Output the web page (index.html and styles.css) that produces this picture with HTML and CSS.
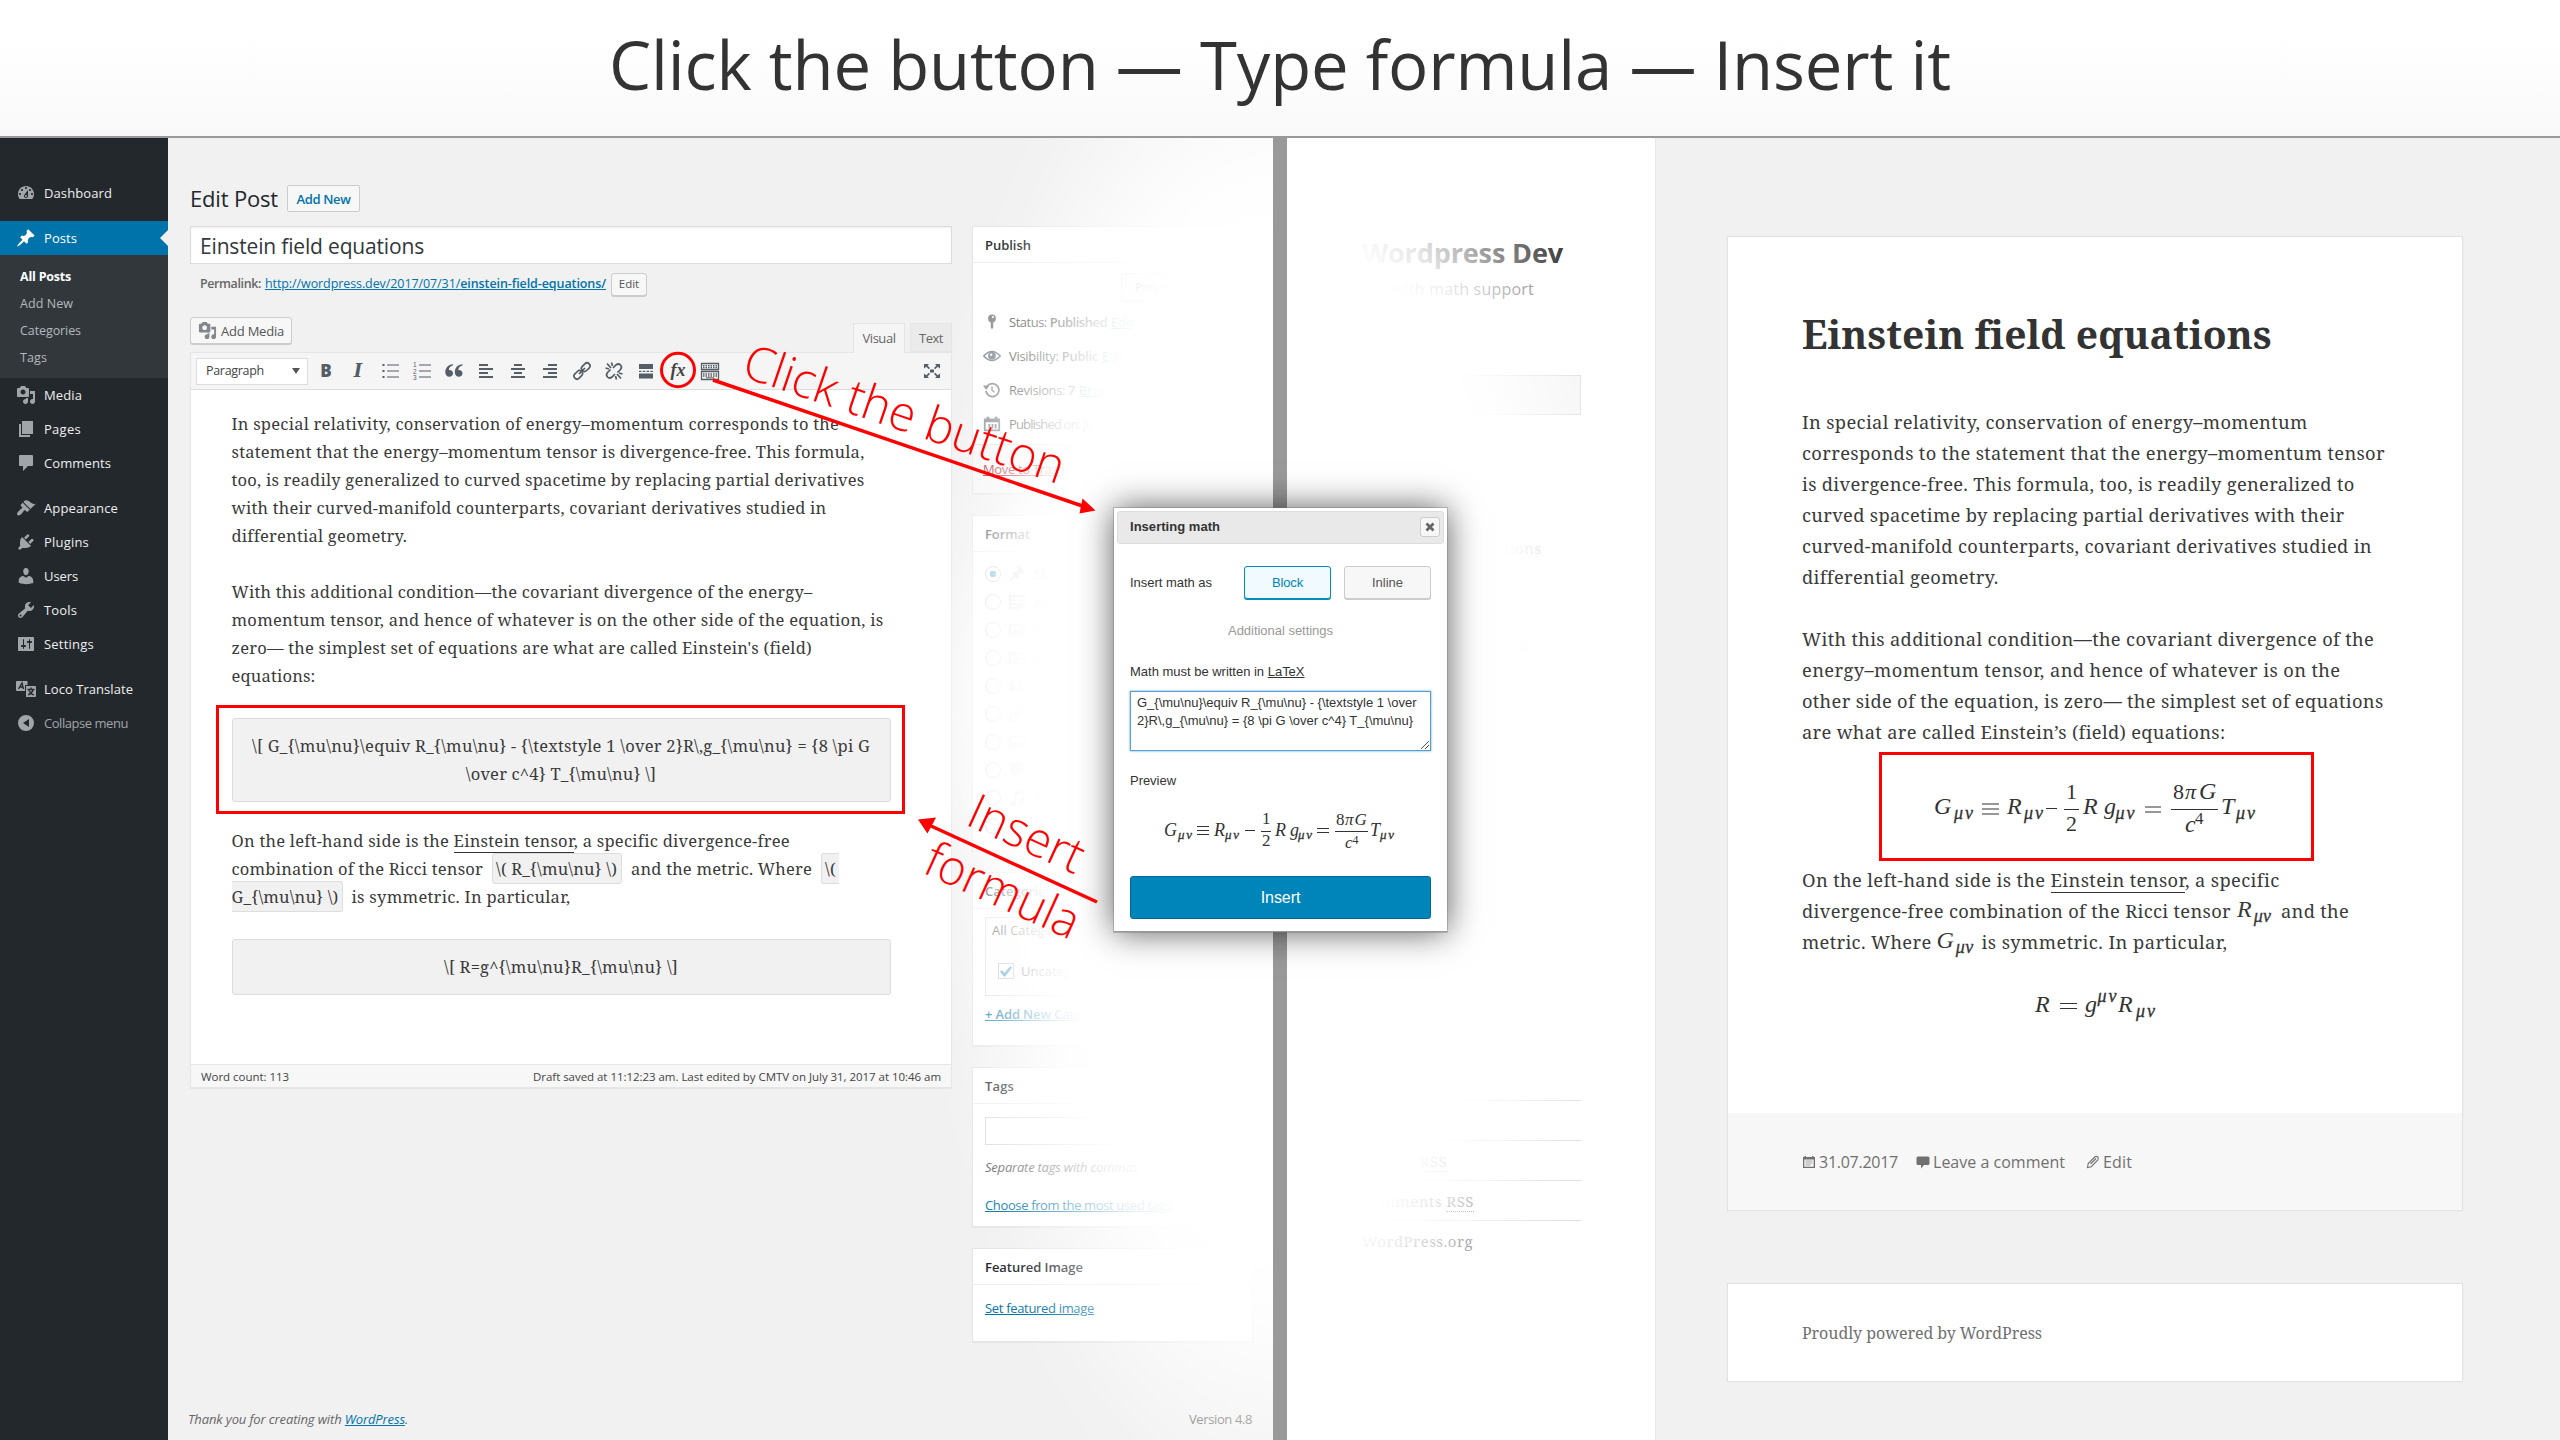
FILE: index.html
```html
<!DOCTYPE html>
<html lang="en">
<head>
<meta charset="utf-8">
<title>Click the button — Type formula — Insert it</title>
<link rel="stylesheet" href="styles.css">
</head>
<body>
<svg class="defs" width="0" height="0">
  <symbol id="i-dash" viewBox="0 0 20 20"><path d="M3.76 16h12.48c1.1-1.37 1.76-3.11 1.76-5 0-4.42-3.58-8-8-8s-8 3.58-8 8c0 1.89.66 3.63 1.76 5zM10 4c.55 0 1 .45 1 1s-.45 1-1 1-1-.45-1-1 .45-1 1-1zM6 6c.55 0 1 .45 1 1s-.45 1-1 1-1-.45-1-1 .45-1 1-1zm8 0c.55 0 1 .45 1 1s-.45 1-1 1-1-.45-1-1 .45-1 1-1zm-5.37 5.55L12 7v6c0 1.1-.9 2-2 2s-2-.9-2-2c0-.57.24-1.08.63-1.45zM4 10c.55 0 1 .45 1 1s-.45 1-1 1-1-.45-1-1 .45-1 1-1zm12 0c.55 0 1 .45 1 1s-.45 1-1 1-1-.45-1-1 .45-1 1-1zm-5 3c0-.55-.45-1-1-1s-1 .45-1 1 .45 1 1 1 1-.45 1-1z"/></symbol>
  <symbol id="i-pin" viewBox="0 0 20 20"><path d="M10.44 3.02l1.82-1.82 6.36 6.35-1.83 1.82c-1.05-.68-2.48-.57-3.41.36l-.75.75c-.92.93-1.04 2.35-.35 3.41l-1.83 1.82-2.41-2.41-2.8 2.79c-.42.42-3.38 2.71-3.8 2.29s1.86-3.39 2.28-3.81l2.79-2.79L4.1 9.36l1.83-1.82c1.05.69 2.48.57 3.4-.36l.75-.75c.93-.92 1.05-2.35.36-3.41z"/></symbol>
  <symbol id="i-media" viewBox="0 0 20 20"><path d="M13 11V4c0-.55-.45-1-1-1h-1.67L9 1H5L3.67 3H2c-.55 0-1 .45-1 1v7c0 .55.45 1 1 1h10c.55 0 1-.45 1-1zM7 4.500c1.380 0 2.500 1.120 2.500 2.500S8.380 9.500 7 9.500 4.500 8.380 4.500 7 5.620 4.500 7 4.500zM14 6h5v10.500c0 1.380-1.120 2.500-2.500 2.500S14 17.880 14 16.500s1.120-2.500 2.500-2.500c.17 0 .34.02.5.05V9h-3V6zm-4 8.050V13h2v3.500c0 1.380-1.120 2.500-2.500 2.500S7 17.880 7 16.500 8.120 14 9.500 14c.17 0 .34.02.5.05z"/></symbol>
  <symbol id="i-page" viewBox="0 0 20 20"><path d="M6 15V2h11v13H6zm-1 1h9v2H3V5h2v11z"/></symbol>
  <symbol id="i-comment" viewBox="0 0 20 20"><path d="M4 2h12q1 0 1 1v9q0 1-1 1h-4l-5 5v-5H4q-1 0-1-1V3q0-1 1-1z"/></symbol>
  <symbol id="i-brush" viewBox="0 0 20 20"><path d="M14.480 11.060L7.410 3.990l1.500-1.500c.5-.56 2.300-.47 3.510.32 1.210.8 1.430 1.280 2.910 2.100 1.180.64 2.450 1.260 4.450.85zm-.71.71L6.700 4.700 4.930 6.470c-.39.39-.39 1.020 0 1.410l1.060 1.060c.39.39.39 1.030 0 1.420-.6.6-1.430 1.110-2.210 1.690-.35.26-.7.53-1.010.84C1.430 14.230.4 16.080 1.400 17.070c.99 1 2.840-.03 4.180-1.360.31-.31.58-.66.85-1.020.57-.78 1.080-1.610 1.690-2.210.39-.39 1.020-.39 1.410 0l1.060 1.060c.39.39 1.020.39 1.410 0z"/></symbol>
  <symbol id="i-plug" viewBox="0 0 20 20"><path d="M13.110 4.360L9.870 7.600 8 5.730l3.240-3.240c.35-.34 1.050-.2 1.560.32.52.51.66 1.210.31 1.550zm-8 1.770l.91-1.120 9.010 9.010-1.190.84c-.71.71-2.630 1.160-3.820 1.160H6.140L4.900 17.260c-.59.59-1.540.59-2.120 0-.59-.58-.59-1.530 0-2.120l1.240-1.240v-3.880c0-1.130.4-3.190 1.090-3.890zm7.260 3.970l3.240-3.240c.34-.35 1.040-.21 1.550.31.52.51.66 1.210.31 1.550l-3.240 3.250z"/></symbol>
  <symbol id="i-user" viewBox="0 0 20 20"><path d="M10 9.250c-2.270 0-2.730-3.440-2.730-3.440C7 4.020 7.820 2 9.970 2c2.160 0 2.980 2.020 2.710 3.810 0 0-.41 3.440-2.680 3.440zm0 2.570L12.720 10c2.390 0 4.520 2.330 4.520 4.530v2.490s-3.650 1.130-7.240 1.130c-3.650 0-7.240-1.130-7.240-1.130v-2.490c0-2.250 1.940-4.480 4.470-4.480z"/></symbol>
  <symbol id="i-tool" viewBox="0 0 20 20"><path d="M16.680 9.770c-1.340 1.340-3.300 1.670-4.950.99l-5.410 6.520c-.99.99-2.590.99-3.580 0s-.99-2.590 0-3.570l6.520-5.420c-.68-1.650-.35-3.610.99-4.950 1.280-1.280 3.120-1.620 4.720-1.060l-2.890 2.890 2.820 2.820 2.860-2.870c.53 1.580.18 3.390-1.080 4.650zM3.810 16.210c.4.39 1.040.39 1.430 0 .4-.4.4-1.040 0-1.430-.39-.4-1.030-.4-1.430 0-.39.39-.39 1.030 0 1.430z"/></symbol>
  <symbol id="i-set" viewBox="0 0 20 20"><path d="M18 16V4c0-.55-.45-1-1-1H3c-.55 0-1 .45-1 1v12c0 .55.45 1 1 1h14c.55 0 1-.45 1-1zM8 11h1c.55 0 1 .45 1 1s-.45 1-1 1H8v1.500c0 .28-.22.5-.5.5s-.5-.22-.5-.5V13H6c-.55 0-1-.45-1-1s.45-1 1-1h1V5.500c0-.28.22-.5.5-.5s.5.22.5.5V11zm5-2h-1c-.55 0-1-.45-1-1s.45-1 1-1h1V5.500c0-.28.22-.5.5-.5s.5.22.5.5V7h1c.55 0 1 .45 1 1s-.45 1-1 1h-1v5.500c0 .28-.22.5-.5.5s-.5-.22-.5-.5V9z"/></symbol>
  <symbol id="i-loco" viewBox="0 0 20 20"><path d="M1 2h10.500v4H9v6H1q-1 0-1-1V3q0-1 1-1z"/><path d="M10 7h9q1 0 1 1v9q0 1-1 1h-9z"/><path d="M2.500 10L6 4l1.500 6M4 8h3M11.500 10.500h7M15 8.500v2M17 11q-1 3.500-5 5M13 11.500q1.500 3.500 5 4.500" fill="none" stroke="#23282d" stroke-width="1.300"/></symbol>
  <symbol id="i-collapse" viewBox="0 0 20 20"><path fill-rule="evenodd" d="M10 2a8 8 0 1 1 0 16 8 8 0 0 1 0-16zM13 6v8l-6-4z"/></symbol>
  <symbol id="i-key" viewBox="0 0 20 20"><circle cx="10" cy="6" r="4.300"/><path d="M8.600 9h2.800v7L10 18l-1.400-2z"/><circle cx="11" cy="4.500" r="1.200" fill="#fff"/></symbol>
  <symbol id="i-eye" viewBox="0 0 20 20"><path d="M.8 10Q10 0 19.200 10 10 20 .8 10z" fill="none" stroke="currentColor" stroke-width="1.600"/><circle cx="10" cy="9.600" r="4.300"/><circle cx="9" cy="8.500" r="1.300" fill="#fff"/></symbol>
  <symbol id="i-rev" viewBox="0 0 20 20"><path d="M3.300 11a7.200 7.200 0 1 0 1.300-5" fill="none" stroke="currentColor" stroke-width="2"/><path d="M0 5h7L3.500 10z"/><path d="M10 6v4.500l3 2" fill="none" stroke="currentColor" stroke-width="1.500"/></symbol>
  <symbol id="i-cal" viewBox="0 0 20 20"><path fill-rule="evenodd" d="M1 4h3V2h3v2h6V2h3v2h3v14H1zm2 4v8h14V8z"/><path d="M6 10h2v5H6zM9.500 10h2v5h-2zM13 10h2v5h-2z"/></symbol>
  <symbol id="i-aside" viewBox="0 0 20 20"><path fill-rule="evenodd" d="M1 2h18v10l-6 6H1zm2 3v2h14V5zm0 4v2h14V9zm0 4v2h8v-2z"/></symbol>
  <symbol id="i-img" viewBox="0 0 20 20"><path fill-rule="evenodd" d="M1 3h18v14H1zm2 2v10h14V5zM4 14l4-5 3 3 3-4 3 6z"/></symbol>
  <symbol id="i-vid" viewBox="0 0 20 20"><path fill-rule="evenodd" d="M1 3h18v14H1zm2 4v8h14V7zM8 8l6 3-6 3z"/></symbol>
  <symbol id="i-quote" viewBox="0 0 20 20"><path d="M9 4.500C6.500 5 5 6.500 4.800 9 7.500 8.800 9 10.300 9 12.300S7.500 15.800 5.300 15.800 1.300 14 1.300 11C1.300 7 4 3.500 9 3.200zM18.500 4.500c-2.500.5-4 2-4.200 4.500 2.700-.2 4.200 1.300 4.200 3.300s-1.500 3.500-3.700 3.500-4-1.800-4-4.800c0-4 2.700-7.500 7.700-7.800z"/></symbol>
  <symbol id="i-link" viewBox="0 0 20 20"><g fill="none" stroke="currentColor" stroke-width="1.700"><rect x="9" y="3.200" width="9.500" height="6" rx="3" transform="rotate(-45 13.700 6.200)"/><rect x="1.500" y="10.800" width="9.500" height="6" rx="3" transform="rotate(-45 6.300 13.800)"/><path d="M7 13l6-6"/></g></symbol>
  <symbol id="i-unlink" viewBox="0 0 20 20"><g fill="none" stroke="currentColor" stroke-width="1.700"><path d="M9 7l3-3q2.500-2 4.500 0t0 4.500l-3 3M11 13l-3 3q-2.500 2-4.500 0t0-4.500l3-3M3 2.500L7 7M7.500 1.500L8.500 5M1.500 7l3.500 1M17 17.500L13 13M12.500 18.500l-1-3.500M18.500 13L15 12"/></g></symbol>
  <symbol id="i-note" viewBox="0 0 20 20"><path d="M7 3l11-2v13a3 2.500 0 1 1-2-2.300V6L9 7.300V16a3 2.500 0 1 1-2-2.300z"/></symbol>
</svg>

<header class="banner"><h1><span data-w="1342">Click the button — Type formula — Insert it</span></h1></header>

<main class="stage">
  <section class="admin">
    <nav class="menu">
      <a class="item"><svg><use href="#i-dash"/></svg><span data-w="68">Dashboard</span></a>
      <a class="item gap current"><svg><use href="#i-pin"/></svg><span data-w="33">Posts</span></a>
      <div class="submenu">
        <b><span data-w="51">All Posts</span></b><a><span data-w="53">Add New</span></a><a><span data-w="61">Categories</span></a><a><span data-w="27">Tags</span></a>
      </div>
      <a class="item"><svg><use href="#i-media"/></svg><span data-w="38">Media</span></a>
      <a class="item"><svg><use href="#i-page"/></svg><span data-w="37">Pages</span></a>
      <a class="item"><svg><use href="#i-comment"/></svg><span data-w="67">Comments</span></a>
      <a class="item gap"><svg><use href="#i-brush"/></svg><span data-w="74">Appearance</span></a>
      <a class="item"><svg><use href="#i-plug"/></svg><span data-w="45">Plugins</span></a>
      <a class="item"><svg><use href="#i-user"/></svg><span data-w="34">Users</span></a>
      <a class="item"><svg><use href="#i-tool"/></svg><span data-w="33">Tools</span></a>
      <a class="item"><svg><use href="#i-set"/></svg><span data-w="50">Settings</span></a>
      <a class="item gap"><svg><use href="#i-loco"/></svg><span data-w="89">Loco Translate</span></a>
      <a class="item dim"><svg><use href="#i-collapse"/></svg><span data-w="84">Collapse menu</span></a>
    </nav>

    <div class="work">
      <div class="heading"><h2><span data-w="88">Edit Post</span></h2><a class="add"><span data-w="54">Add New</span></a></div>
      <div class="columns">
        <div class="main-col">
          <div class="title-input"><span data-w="224">Einstein field equations</span></div>
          <div class="permalink"><b><span data-w="61">Permalink:</span></b><a><span data-w="341">http://wordpress.dev/2017/07/31/<b>einstein-field-equations/</b></span></a><button class="small">Edit</button></div>
          <div class="tools-row"><button class="media"><svg><use href="#i-media"/></svg><span data-w="63">Add Media</span></button><div class="tabs"><span class="tab on"><span data-w="33">Visual</span></span><span class="tab"><span data-w="24">Text</span></span></div></div>
          <div class="editor">
            <div class="toolbar">
              <span class="select"><span data-w="58">Paragraph</span><i></i></span>
              <span class="tb bold">B</span><span class="tb ital">I</span>
              <svg class="tb" viewBox="0 0 20 20"><path d="M7 4h12M7 10h12M7 16h12" stroke="currentColor" stroke-width="1.100"/><path d="M2.500 3h2v2h-2zM2.500 9h2v2h-2zM2.500 15h2v2h-2z"/></svg>
              <svg class="tb" viewBox="0 0 20 20"><path d="M7 4h12M7 10h12M7 16h12" stroke="currentColor" stroke-width="1.100"/><g font-size="6.500" font-family="Liberation Sans"><text x="1" y="6">1</text><text x="1" y="12.500">2</text><text x="1" y="19">3</text></g></svg>
              <svg class="tb"><use href="#i-quote"/></svg>
              <svg class="tb" viewBox="0 0 20 20"><path d="M3 4h9M3 8h14M3 12h9M3 16h14" stroke="currentColor" stroke-width="2"/></svg>
              <svg class="tb" viewBox="0 0 20 20"><path d="M6 4h8M3 8h14M6 12h8M3 16h14" stroke="currentColor" stroke-width="2"/></svg>
              <svg class="tb" viewBox="0 0 20 20"><path d="M8 4h9M3 8h14M8 12h9M3 16h14" stroke="currentColor" stroke-width="2"/></svg>
              <svg class="tb"><use href="#i-link"/></svg>
              <svg class="tb"><use href="#i-unlink"/></svg>
              <svg class="tb" viewBox="0 0 20 20"><path d="M3 3h14v5H3zM3 12.500h14v5H3z"/><path d="M3 10.300h14" stroke="currentColor" stroke-width="1.200" stroke-dasharray="2.500 1.300"/></svg>
              <span class="tb fx">fx</span>
              <svg class="tb" viewBox="0 0 20 20"><path d="M1.500 2.500h17v6h-17zM1.500 10.500h17v8h-17z" fill="none" stroke="currentColor" stroke-width="1.300"/><path d="M3 4.600h14M3 6.500h14M3 13h14M3 15h14" stroke="currentColor" stroke-width="1.300" stroke-dasharray="1.500 1"/><path d="M6 16.800h8" stroke="currentColor"/></svg>
              <svg class="tb full" viewBox="0 0 20 20"><path d="M2 3h5L5.500 4.500 8 7 6.800 8.200l-2.500-2.500L2 7.500zM18 3v4.500l-2.300-1.800-2.500 2.500L12 7l2.500-2.500L13 3zM2 17v-4.500l2.300 1.800 2.500-2.500L8 13l-2.500 2.500L7 17zM18 17h-5l1.500-1.500L12 13l1.200-1.200 2.500 2.500 2.300-1.800zM8 8.500h4v3H8z"/></svg>
            </div>
            <div class="copy">
              <p><span data-w="607.500">In special relativity, conservation of energy–momentum corresponds to the</span><br><span data-w="633">statement that the energy–momentum tensor is divergence-free. This formula,</span><br><span data-w="633">too, is readily generalized to curved spacetime by replacing partial derivatives</span><br><span data-w="595">with their curved-manifold counterparts, covariant derivatives studied in</span><br><span data-w="175">differential geometry.</span></p>
              <p><span data-w="581">With this additional condition—the covariant divergence of the energy–</span><br><span data-w="652">momentum tensor, and hence of whatever is on the other side of the equation, is</span><br><span data-w="580">zero— the simplest set of equations are what are called Einstein's (field)</span><br><span data-w="84">equations:</span></p>
              <div class="code first"><span data-w="618">\[ G_{\mu\nu}\equiv R_{\mu\nu} - {\textstyle 1 \over 2}R\,g_{\mu\nu} = {8 \pi G</span><br><span data-w="190.500">\over c^4} T_{\mu\nu} \]</span></div>
              <p class="tight"><span data-w="558">On the left-hand side is the <a>Einstein tensor</a>, a specific divergence-free</span><br><span data-w="251.500">combination of the Ricci tensor</span><span class="chip c1"><span data-w="121">\( R_{\mu\nu} \)</span></span><span data-w="181">and the metric. Where</span><span class="chip c2"><span data-w="11">\(</span></span><br><span class="chip c3"><span data-w="107">G_{\mu\nu} \)</span></span><span data-w="219">is symmetric. In particular,</span></p>
              <div class="code"><span data-w="234">\[ R=g^{\mu\nu}R_{\mu\nu} \]</span></div>
            </div>
            <div class="status"><span data-w="88">Word count: 113</span><span data-w="408">Draft saved at 11:12:23 am. Last edited by CMTV on July 31, 2017 at 10:46 am</span></div>
          </div>
        </div>
        <aside class="side">
          <div class="box publish"><h3><span data-w="46">Publish</span></h3>
            <div class="preview-row"><button class="small">Preview Changes</button></div>
            <p><svg><use href="#i-key"/></svg><span data-w="98">Status: <b>Published</b></span><a>Edit</a></p>
            <p><svg><use href="#i-eye"/></svg><span data-w="89">Visibility: <b>Public</b></span><a>Edit</a></p>
            <p><svg><use href="#i-rev"/></svg><span data-w="66">Revisions: <b>7</b></span><a>Browse</a></p>
            <p><svg><use href="#i-cal"/></svg><span data-w="134">Published on: <b>Jul 31, 2017</b></span></p>
            <div class="trash"><a><span data-w="82">Move to Trash</span></a></div></div>
          <div class="box format"><h3><span data-w="45">Format</span></h3>
            <label><i class="on"></i><svg><use href="#i-pin"/></svg>Standard</label>
            <label><i></i><svg><use href="#i-aside"/></svg>Aside</label>
            <label><i></i><svg><use href="#i-img"/></svg>Image</label>
            <label><i></i><svg><use href="#i-vid"/></svg>Video</label>
            <label><i></i><svg><use href="#i-quote"/></svg>Quote</label>
            <label><i></i><svg><use href="#i-link"/></svg>Link</label>
            <label><i></i><svg><use href="#i-img"/></svg>Gallery</label>
            <label><i></i><svg><use href="#i-comment"/></svg>Status</label>
            <label><i></i><svg><use href="#i-note"/></svg>Audio</label>
            <label><i></i><svg><use href="#i-comment"/></svg>Chat</label></div>
          <div class="box cats"><h3><span data-w="67">Categories</span></h3>
            <div class="catbox"><div>All Categories</div><div class="check"><i><svg viewBox="0 0 14 14"><path d="M2 7l3.500 4L12 3" fill="none" stroke="#1e8cbe" stroke-width="2.500"/></svg></i>Uncategorised</div></div>
            <a class="addcat"><span data-w="124">+ Add New Category</span></a></div>
          <div class="box tags"><h3><span data-w="29">Tags</span></h3><div class="field"></div><em><span data-w="153">Separate tags with commas</span></em><a><span data-w="186">Choose from the most used tags</span></a></div>
          <div class="box feat"><h3><span data-w="98">Featured Image</span></h3><a><span data-w="109">Set featured image</span></a></div>
        </aside>
      </div>
      <footer class="foot"><em><span data-w="220">Thank you for creating with <a>WordPress</a>.</span></em><span data-w="63">Version 4.8</span></footer>
    </div>
  </section>

  <div class="divider"></div>

  <section class="site">
    <aside class="widgets">
      <h2><span data-w="201">Wordpress Dev</span></h2>
      <p class="tag"><span data-w="142">with math support</span></p>
      <div class="search"></div>
      <h4 class="w1"><span data-w="121">RECENT POSTS</span></h4>
      <p class="w2"><span data-w="179">Einstein field equations</span></p>
      <h4 class="w3"><span data-w="166">RECENT COMMENTS</span></h4>
      <h4 class="w4"><span data-w="102">CATEGORIES</span></h4>
      <p class="w5"><span data-w="108">Uncategorised</span></p>
      <h4 class="w6"><span data-w="44">META</span></h4>
      <ul><li><span data-w="82">Site Admin</span></li><li><span data-w="56">Log out</span></li><li><span data-w="85">Entries <abbr>RSS</abbr></span></li><li><span data-w="112">Comments <abbr>RSS</abbr></span></li><li><span data-w="111">WordPress.org</span></li></ul>
    </aside>
    <div class="page">
      <article class="card">
        <div class="post">
          <h2><span data-w="468">Einstein field equations</span></h2>
          <p><span data-w="505.500">In special relativity, conservation of energy–momentum</span><br><span data-w="583">corresponds to the statement that the energy–momentum tensor</span><br><span data-w="552.500">is divergence-free. This formula, too, is readily generalized to</span><br><span data-w="542.500">curved spacetime by replacing partial derivatives with their</span><br><span data-w="570">curved-manifold counterparts, covariant derivatives studied in</span><br><span data-w="196">differential geometry.</span></p>
          <p><span data-w="572">With this additional condition—the covariant divergence of the</span><br><span data-w="538.500">energy–momentum tensor, and hence of whatever is on the</span><br><span data-w="581.500">other side of the equation, is zero— the simplest set of equations</span><br><span data-w="423">are what are called Einstein’s (field) equations:</span></p>
          <svg class="math boxed" viewBox="1882 755 429 103">
            <g font-size="24"><text x="1934" y="814">G</text><text x="2007" y="814">R</text><text x="2083" y="814">R</text><text x="2104" y="814">g</text><text x="2221" y="814">T</text></g>
            <g font-size="18"><text class="sb" x="1954" y="819" textLength="19">μν</text><text class="sb" x="2024" y="819" textLength="19">μν</text><text class="sb" x="2115.500" y="819" textLength="19">μν</text><text class="sb" x="2236" y="819" textLength="19">μν</text></g>
            <g font-size="22"><text class="up" x="2066" y="798.500">1</text><text class="up" x="2066" y="830.500">2</text><text class="up" x="2173" y="799">8</text><text x="2185" y="799">π</text><text x="2199" y="799" font-size="24">G</text><text x="2185" y="831.500" font-size="24">c</text><text class="up" x="2195" y="824" font-size="17">4</text></g>
            <path d="M1982 804h17M1982 809h17M1982 814h17M2046 808.500h11M2064 809.500h15M2145 807h16M2145 812h16M2171 809.500h47"/>
          </svg>
          <p class="tight"><span data-w="477">On the left-hand side is the <a>Einstein tensor</a>, a specific</span><br><span data-w="429">divergence-free combination of the Ricci tensor</span><span class="im r">R<sub>μν</sub></span><span data-w="68">and the</span><br><span data-w="129.500">metric. Where</span><span class="im g">G<sub>μν</sub></span><span data-w="246">is symmetric. In particular,</span></p>
          <svg class="math plain" viewBox="1802 958 587 86">
            <g font-size="24"><text x="2035" y="1012">R</text><text x="2085" y="1012">g</text><text x="2118" y="1012">R</text></g>
            <g font-size="18"><text class="sb" x="2097.500" y="1001.500" textLength="19">μν</text><text class="sb" x="2136" y="1017" textLength="19">μν</text></g>
            <path d="M2060 1003.500h17M2060 1008.500h17"/>
          </svg>
        </div>
        <div class="meta">
          <svg viewBox="0 0 14 14"><path fill-rule="evenodd" d="M1 2h1.500V1h1.500v1h6V1h1.500v1H13v11H1zM2.300 4.500v7.200h9.400V4.500z"/><path d="M3.500 6h7M3.500 8h7M3.500 10h5" stroke="currentColor" stroke-width=".6"/></svg><span class="m1"><span data-w="79">31.07.2017</span></span>
          <svg viewBox="0 0 14 14"><path d="M2 1.500h10q1.500 0 1.500 1.500v5.500q0 1.500-1.500 1.500H8l-3 3.500V10H2Q.5 10 .5 8.500V3Q.5 1.500 2 1.500z"/></svg><span class="m2"><span data-w="132">Leave a comment</span></span>
          <svg viewBox="0 0 14 14"><path d="M1.500 12.500l.7-4L9 1.800q1.500-1 2.700.2t.2 2.800L5.300 11.700zM4.500 9l5.500-5.500" fill="none" stroke="currentColor" stroke-width="1.100"/></svg><span><span data-w="29">Edit</span></span>
        </div>
      </article>
      <footer class="card credit"><span data-w="240">Proudly powered by WordPress</span></footer>
    </div>
  </section>

  <div class="fade"></div>
  <div class="bar"></div>
</main>

<div class="dialog">
  <div class="dlg-head"><b><span data-w="90">Inserting math</span></b><button><svg viewBox="0 0 10 10"><path d="M1.500 1.500l7 7M8.500 1.500l-7 7" stroke="#666" stroke-width="2.800"/></svg></button></div>
  <div class="dlg-row"><span class="grow"><span data-w="82">Insert math as</span></span><button class="blk"><span data-w="31">Block</span></button><button><span data-w="31">Inline</span></button></div>
  <div class="addl"><span data-w="105">Additional settings</span></div>
  <div class="lbl"><span data-w="174.500">Math must be written in <a>LaTeX</a></span></div>
  <div class="area"><span data-w="279.500">G_{\mu\nu}\equiv R_{\mu\nu} - {\textstyle 1 \over</span><br><span data-w="276">2}R\,g_{\mu\nu} = {8 \pi G \over c^4} T_{\mu\nu}</span><svg viewBox="0 0 8 8"><path d="M0 8l8-8M4 8l4-4" stroke="#555"/></svg></div>
  <div class="lbl prev"><span data-w="46">Preview</span></div>
  <svg class="math dm" viewBox="1130 800 301 70">
    <g font-size="18"><text x="1164" y="836">G</text><text x="1214" y="836">R</text><text x="1275" y="836">R</text><text x="1290" y="836">g</text><text x="1370" y="836">T</text></g>
    <g font-size="13"><text class="sb" x="1178" y="839" textLength="14">μν</text><text class="sb" x="1225" y="839" textLength="14">μν</text><text class="sb" x="1298" y="839" textLength="14">μν</text><text class="sb" x="1380" y="839" textLength="14">μν</text></g>
    <g font-size="17"><text class="up" x="1262" y="824">1</text><text class="up" x="1262" y="846">2</text><text class="up" x="1336" y="824.500">8</text><text x="1345" y="824.500">π</text><text x="1354.500" y="824.500">G</text><text x="1345" y="848">c</text><text class="up" x="1352.500" y="844" font-size="12">4</text></g>
    <path class="thin" d="M1197 826.500h12M1197 830.500h12M1197 834.500h12M1245 830.500h10M1261 831.500h10M1317 828.500h12M1317 832.500h12M1335 831.500h33"/>
  </svg>
  <button class="go"><span data-w="39.500">Insert</span></button>
</div>

<svg class="notes" viewBox="0 0 2560 1440">
  <rect x="217.500" y="706.500" width="686" height="106"/>
  <ellipse cx="678" cy="370" rx="16.500" ry="16.700"/>
  <path d="M713 380L1084 506.500M1097 902L930 825.500"/>
  <path class="head" d="M1082.500 498.500L1095.500 510.500 1079.500 513.500zM936 817.500L918 819.500 927.500 833.500z"/>
  <text transform="translate(740 376) rotate(18.800)" font-size="49" textLength="336" lengthAdjust="spacingAndGlyphs">Click the button</text>
  <text transform="translate(964 824) rotate(24.500)" font-size="49" textLength="122" lengthAdjust="spacingAndGlyphs">Insert</text>
  <text transform="translate(921 872) rotate(24.500)" font-size="49" textLength="164" lengthAdjust="spacingAndGlyphs">formula</text>
</svg>
<script src="fit.js"></script>
</body>
</html>
```
FILE: styles.css
```css
* { box-sizing: border-box; margin: 0; padding: 0; }
body { width: 2560px; height: 1440px; overflow: hidden; position: relative; background: #f1f1f1; font: 13px/20px "Open Sans", "Noto Sans", sans-serif; color: #444; }
.defs { position: absolute; }
svg { fill: currentColor; flex: none; }
button { font: inherit; color: #555; background: #f7f7f7; border: 1px solid #ccc; border-radius: 3px; box-shadow: 0 1px 0 #ccc; white-space: nowrap; }
[data-w] { display: inline-block; white-space: pre; text-decoration: inherit; }
a { color: #0073aa; text-decoration: underline; }

.banner { position: relative; z-index: 2; height: 138px; background: linear-gradient(#fff 25%, #f9f9f9); border-bottom: 2px solid #999; text-align: center; }
.banner h1 { font-weight: 400; font-size: 67px; line-height: 128px; color: #333; }
.stage { position: relative; display: flex; height: 1303px; margin-top: -1px; }

.admin { width: 1273px; display: flex; background: #f1f1f1; }
.menu { width: 168px; background: #23282d; padding-top: 39px; color: #eee; }
.item { display: flex; align-items: center; height: 34px; padding-left: 16px; gap: 8px; color: #eee; text-decoration: none; }
.item svg { width: 20px; height: 20px; color: #a0a5aa; }
.gap { margin-top: 11px; }
.current { background: #0073aa; color: #fff; position: relative; }
.current svg { color: #fff; }
.current::after { content: ""; position: absolute; right: 0; top: 9px; border: 8px solid transparent; border-right-color: #f1f1f1; border-left: 0; }
.dim { color: #a0a5aa; }
.submenu { background: #32373c; height: 123px; padding: 7.5px 20px; line-height: 27px; }
.submenu > * { display: block; height: 27px; text-decoration: none; color: #b4b9be; font-size: 12.5px; }
.submenu b { color: #fff; }

.work { flex: 1; padding: 42px 20px 0 22px; display: flex; flex-direction: column; }
.heading { display: flex; align-items: center; gap: 9px; height: 40px; }
.heading h2 { font-size: 22px; font-weight: 400; color: #23282d; line-height: 38px; margin-top: -2px; }
.add { border: 1px solid #ccc; border-radius: 2px; background: #f7f7f7; width: 73px; height: 27px; margin-top: -1px; text-align: center; font-weight: 600; text-decoration: none; line-height: 26px; }
.columns { display: grid; grid-template-columns: 762px 281px; gap: 20px; margin-top: 7px; }
.title-input { height: 38px; background: #fff; border: 1px solid #ddd; padding-left: 9px; font-size: 21px; line-height: 38px; color: #32373c; box-shadow: inset 0 1px 2px rgba(0,0,0,.07); }
.permalink { display: flex; align-items: center; gap: 4px; height: 24px; margin: 8px 0 21px 10px; font-size: 12.5px; }
.permalink > b { color: #666; font-weight: 600; }
.permalink a b { font-weight: 600; }
button.small { height: 23px; width: 36px; font-size: 11.5px; line-height: 20px; }
.permalink button { margin-left: 1px; }
.tools-row { display: flex; justify-content: space-between; height: 35px; }
.media { width: 102px; height: 27px; display: flex; align-items: center; gap: 4px; padding-left: 7px; font-size: 13px; }
.media svg { width: 19px; height: 19px; color: #82878c; }
.tabs { display: flex; gap: 5px; padding-top: 6px; }
.tab { height: 29px; width: 42px; border: 1px solid #e5e5e5; background: #ebebeb; color: #666; text-align: center; line-height: 29px; }
.tab.on { width: 52px; height: 30px; background: #f5f5f5; border-bottom-color: #f5f5f5; z-index: 1; }
.editor { border: 1px solid #e5e5e5; background: #fff; box-shadow: 0 1px 1px rgba(0,0,0,.04); height: 736px; display: flex; flex-direction: column; }
.toolbar { display: flex; align-items: center; height: 37px; background: #f5f5f5; border-bottom: 1px solid #ddd; padding-left: 5px; color: #555d66; }
.select { width: 112px; height: 27px; background: #fff; border: 1px solid #ddd; display: flex; justify-content: space-between; align-items: center; padding: 0 7px 0 9px; margin-right: 2px; color: #444; font-size: 12.5px; }
.select i { border: 4.5px solid transparent; border-top: 6px solid #555; border-bottom: 0; }
.tb { width: 20px; height: 20px; margin: 0 6px; text-align: center; line-height: 20px; }
.bold { font-weight: 800; font-size: 17px; }
.ital { font: italic bold 18px/20px "DejaVu Serif", serif; }
.fx { font: italic bold 18px/18px "Liberation Serif", serif; color: #444; }
.full { margin-left: auto; margin-right: 9px; }
.copy { flex: 1; padding: 20px 60.5px 0 40.5px; font: 16.500px/28px "Noto Serif", "DejaVu Serif Condensed", "DejaVu Serif", serif; color: #3a3a3a; }
.copy p { margin-bottom: 28px; white-space: nowrap; }
.copy p a, .post p a { color: inherit; text-decoration: none; border-bottom: 1px solid #333; }
.copy [data-w], .post [data-w] { height: 28px; vertical-align: top; }
.code { border: 1px solid #ddd; border-radius: 3px; background: #f1f1f1; text-align: center; padding: 13px 0; white-space: nowrap; line-height: 28px; }
.first { margin: 0 0 25px; }
.chip { display: inline-block; height: 31px; margin-top: -2px; margin-bottom: -1px; vertical-align: top; background: #f1f1f1; border: 1px solid #ddd; border-radius: 3px; line-height: 30px; }
.c1 { width: 130px; margin-left: 9px; margin-right: 9px; padding-left: 3px; }
.c2 { width: 18px; margin-left: 9px; padding-left: 3px; border-right: 0; border-radius: 3px 0 0 3px; }
.c3 { width: 111px; margin-right: 9px; border-left: 0; border-radius: 0 3px 3px 0; }
.status { height: 23px; border-top: 1px solid #e5e5e5; background: #f7f7f7; display: flex; justify-content: space-between; padding: 0 10px; font-size: 11.5px; line-height: 23px; color: #444; }

.side { display: flex; flex-direction: column; gap: 21px; }
.box { background: #fff; border: 1px solid #e5e5e5; box-shadow: 0 1px 1px rgba(0,0,0,.04); padding: 0 11px 0 12px; }
.box h3 { height: 36px; margin: 0 -11px 0 -12px; padding-left: 12px; border-bottom: 1px solid #eee; font-size: 13px; font-weight: 600; line-height: 37px; color: #23282d; }
.box svg { width: 18px; height: 18px; color: #82878c; }
.publish { height: 268px; }
.preview-row { padding: 10px 0 4px; display: flex; justify-content: flex-end; }
.preview-row button { width: 120px; height: 28px; }
.box p { height: 34px; display: flex; align-items: center; gap: 4px; }
.box p svg { margin-left: -2px; margin-right: 4px; }
.box p b { font-weight: 600; }
.trash { margin: 3px -11px 0 -12px; padding: 14px 10px; height: 49px; background: #f5f5f5; border-top: 1px solid #ddd; }
.trash a { color: #a00; }
.format { height: 336px; }
.format h3 { margin-bottom: 8px; }
.format label { display: flex; align-items: center; height: 28px; gap: 7px; }
.format label i { width: 16px; height: 16px; border: 1px solid #b4b9be; border-radius: 50%; background: #fff; }
.format label i.on { background: radial-gradient(#1e8cbe 3px, #fff 3.5px); }
.format svg { margin-right: 1px; opacity: .6; }
.cats { height: 174px; }
.catbox { margin-top: 8px; border: 1px solid #ddd; height: 79px; padding: 2px 6px; background: #fdfdfd; }
.check { display: flex; gap: 7px; align-items: center; margin: 21px 6px 0; }
.check i { width: 16px; height: 16px; border: 1px solid #b4b9be; display: flex; background: #fff; }
.check svg { width: 14px; height: 14px; }
.addcat { display: block; margin-top: 8px; font-weight: 600; }
.tags { height: 160px; }
.field { height: 28px; border: 1px solid #ddd; margin: 13px 0 12px; }
.tags em, .tags a { display: block; color: #666; margin-bottom: 18px; }
.tags a { color: #0073aa; }
.feat { height: 94px; }
.feat a { display: block; margin-top: 13px; }
.foot { margin-top: 67px; display: flex; justify-content: space-between; margin-left: -2px; margin-right: 1px; color: #666; }

.divider { width: 14px; }
.bar { position: absolute; left: 1273px; top: 0; width: 14px; height: 1303px; background: #999; }
.fade { position: absolute; inset: 0; background:
  radial-gradient(ellipse 360px 320px at 1280px 563px, #fff 58%, rgba(255,255,255,.65) 78%, rgba(255,255,255,0) 100%),
  radial-gradient(ellipse 360px 785px at 1280px 603px, #fff 65%, rgba(255,255,255,.88) 73%, rgba(255,255,255,.5) 85%, rgba(255,255,255,.1) 98%, rgba(255,255,255,0) 106%); }

.site { flex: 1; display: flex; }
.widgets { width: 369px; background: #fff; border-right: 1px solid #e8e8e8; padding: 96px 74px 0 75px; color: #333; }
.widgets h2 { font-size: 27px; line-height: 40px; font-weight: 700; }
.tag { font-size: 16px; line-height: 32px; padding-left: 30px; color: #707070; }
.search { height: 40px; margin-top: 70px; border: 1px solid #ddd; background: #f5f5f5; }
.widgets h4 { font: 700 15px/20px "Noto Sans", sans-serif; }
.widgets p.w2, .widgets p.w5, .widgets li { font-family: "Noto Serif", "DejaVu Serif Condensed", serif; font-size: 15px; }
.w1 { margin-top: 75px; } .w2 { margin-top: 28px; } .w3 { margin-top: 77px; }
.w4 { margin-top: 224px; } .w5 { margin-top: 28px; } .w6 { margin-top: 77px; }
.widgets ul { list-style: none; margin-top: 17px; }
.widgets li { height: 40px; line-height: 40px; border-bottom: 1px solid #ddd; }
.widgets li:last-child { border: 0; }
abbr { border-bottom: 1px dotted #333; }

.page { padding: 100px 98px 0 72px; flex: 1; }
.card { background: #fff; box-shadow: 0 0 1px 1px rgba(0,0,0,.06); width: 734px; }
.post { height: 876px; padding: 74px 73px 0 74px; font: 18.300px/31px "Noto Serif", "DejaVu Serif Condensed", "DejaVu Serif", serif; color: #3a3a3a; }
.post h2 { font-size: 39px; line-height: 46px; height: 48px; margin-bottom: 47px; font-weight: 700; color: #333; }
.post h2 [data-w] { height: 46px; }
.post p { margin-bottom: 31px; white-space: nowrap; }
.post p [data-w] { height: 31px; }
.post p:nth-of-type(2) { margin-bottom: 5px; }
.post p.tight { margin: 3px 0 0; }
.math { display: block; font-family: "Liberation Serif", serif; font-style: italic; fill: #333; }
.math .up { font-style: normal; }
.math .sb { stroke: #333; stroke-width: .3; }
.math path { stroke: #333; stroke-width: 1.2; fill: none; }
.math .thin { stroke-width: 1; }
.boxed { width: 435px; height: 109px; margin-left: 77px; border: 3px solid #f00; }
.plain { width: 587px; height: 86px; margin-top: 1px; }
.im { display: inline-block; vertical-align: top; height: 31px; font: italic 24px/29px "Liberation Serif", serif; margin-left: 6px; width: 44px; }
.im.g { width: 45px; margin-left: 5px; }
.im sub { font-size: 18px; line-height: 0; vertical-align: -5px; margin-left: 2px; letter-spacing: .3px; -webkit-text-stroke: .3px #333; }
.meta { height: 97px; background: #f7f7f7; padding-left: 74px; display: flex; align-items: center; gap: 3px; font-size: 16px; color: #707070; }
.meta svg { width: 14px; height: 14px; }
.meta .m1 { margin-right: 15px; } .meta .m2 { margin-right: 18px; }
.credit { margin-top: 74px; height: 97px; padding-left: 74px; font: 16px/99px "Noto Serif", "DejaVu Serif Condensed", serif; color: #707070; }

.dialog { position: absolute; left: 1114px; top: 508px; width: 333px; height: 424px; background: #fff; border-bottom: 1px solid #999; box-shadow: 0 0 0 1px rgba(110,110,110,.35), 0 0 32px rgba(0,0,0,.65); padding: 3px; font: 13px/18px "Liberation Sans", Arial, sans-serif; color: #333; }
.dlg-head { height: 33px; background: #e9e9e9; border: 1px solid #ddd; border-radius: 3px; display: flex; justify-content: space-between; align-items: center; padding: 0 3px 1px 12px; }
.dlg-head b { margin-top: -1px; }
.dlg-head button { width: 20px; height: 20px; box-shadow: none; display: flex; align-items: center; justify-content: center; }
.dlg-head svg { width: 10px; height: 10px; }
.dlg-row { display: flex; gap: 13px; align-items: center; margin: 22px 13px 0; }
.grow { flex: 1; }
.dlg-row button { width: 87px; height: 33px; }
.dlg-row .blk { background: #f0faff; border-color: #008ec2; color: #0085ba; box-shadow: 0 1px 0 #008ec2; }
.addl { text-align: center; color: #999; margin-top: 23px; }
.lbl { margin: 23px 13px 0; }
.lbl a { color: #333; }
.area { position: relative; margin: 10px 13px 0; height: 60px; border: 1px solid #5b9dd9; box-shadow: 0 0 2px rgba(30,140,190,.8); padding: 2px 6px; white-space: nowrap; }
.area svg { position: absolute; right: 1px; bottom: 1px; width: 8px; height: 8px; }
.prev { margin-top: 21px; }
.dm { width: 301px; height: 70px; margin: 10px 13px 0; }
.go { display: block; width: 301px; height: 43px; margin: 6px 13px 0; background: #0085ba; border: 1px solid #006799; box-shadow: none; color: #fff; font-size: 16px; }

.notes { position: absolute; left: 0; top: 0; width: 2560px; height: 1440px; fill: none; stroke: #f00; stroke-width: 3; pointer-events: none; z-index: 3; }
.notes path { stroke-width: 3.5; }
.notes .head { fill: #f00; stroke: none; }
.notes text { fill: #f00; stroke: none; font-family: "Open Sans", sans-serif; font-weight: 300; }
```
FILE: fit.js
```js
// Sets each text run to its designed measure by adjusting the tracking.
document.querySelectorAll('[data-w]').forEach(function (el) {
  var want = parseFloat(el.dataset.w);
  var have = el.getBoundingClientRect().width;
  el.style.letterSpacing = (want - have) / el.textContent.length + 'px';
});
```
